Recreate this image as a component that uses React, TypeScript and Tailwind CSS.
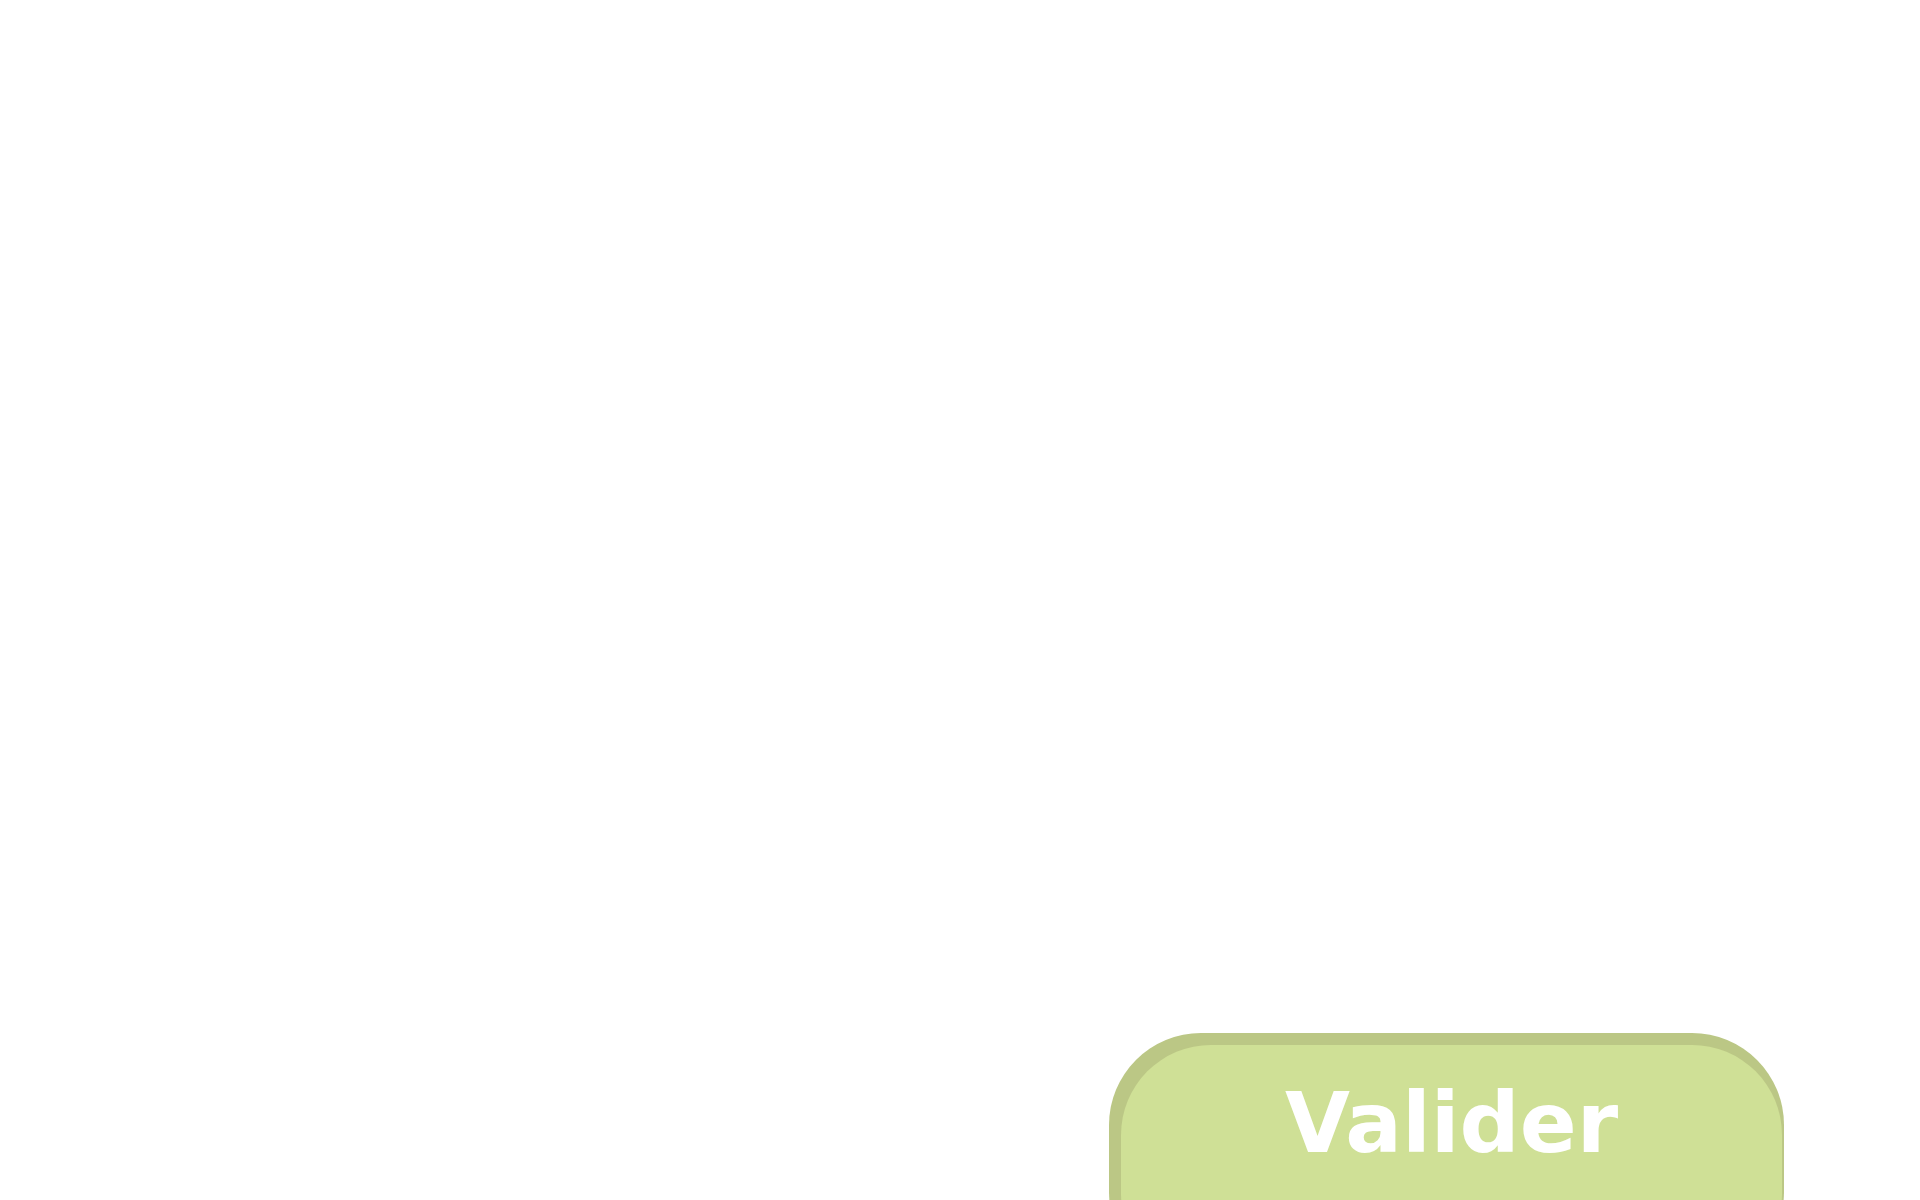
import React from 'react';

const App: React.FC = () => {
  return (
    <div className="min-h-screen w-full bg-white pl-[1109px] pt-[1033px]">
      <div className="w-[675px] rounded-[92px] bg-[#bbc785] pt-3 pr-[2px] pl-3">
        <button
          type="button"
          className="flex h-[240px] w-full items-start justify-center rounded-[90px] bg-[#cfe096] pt-[36px] text-[84px] leading-none font-bold text-white"
          style={{ fontFamily: '"DejaVu Sans", Verdana, sans-serif' }}
        >
          Valider
        </button>
      </div>
    </div>
  );
};

export default App;
